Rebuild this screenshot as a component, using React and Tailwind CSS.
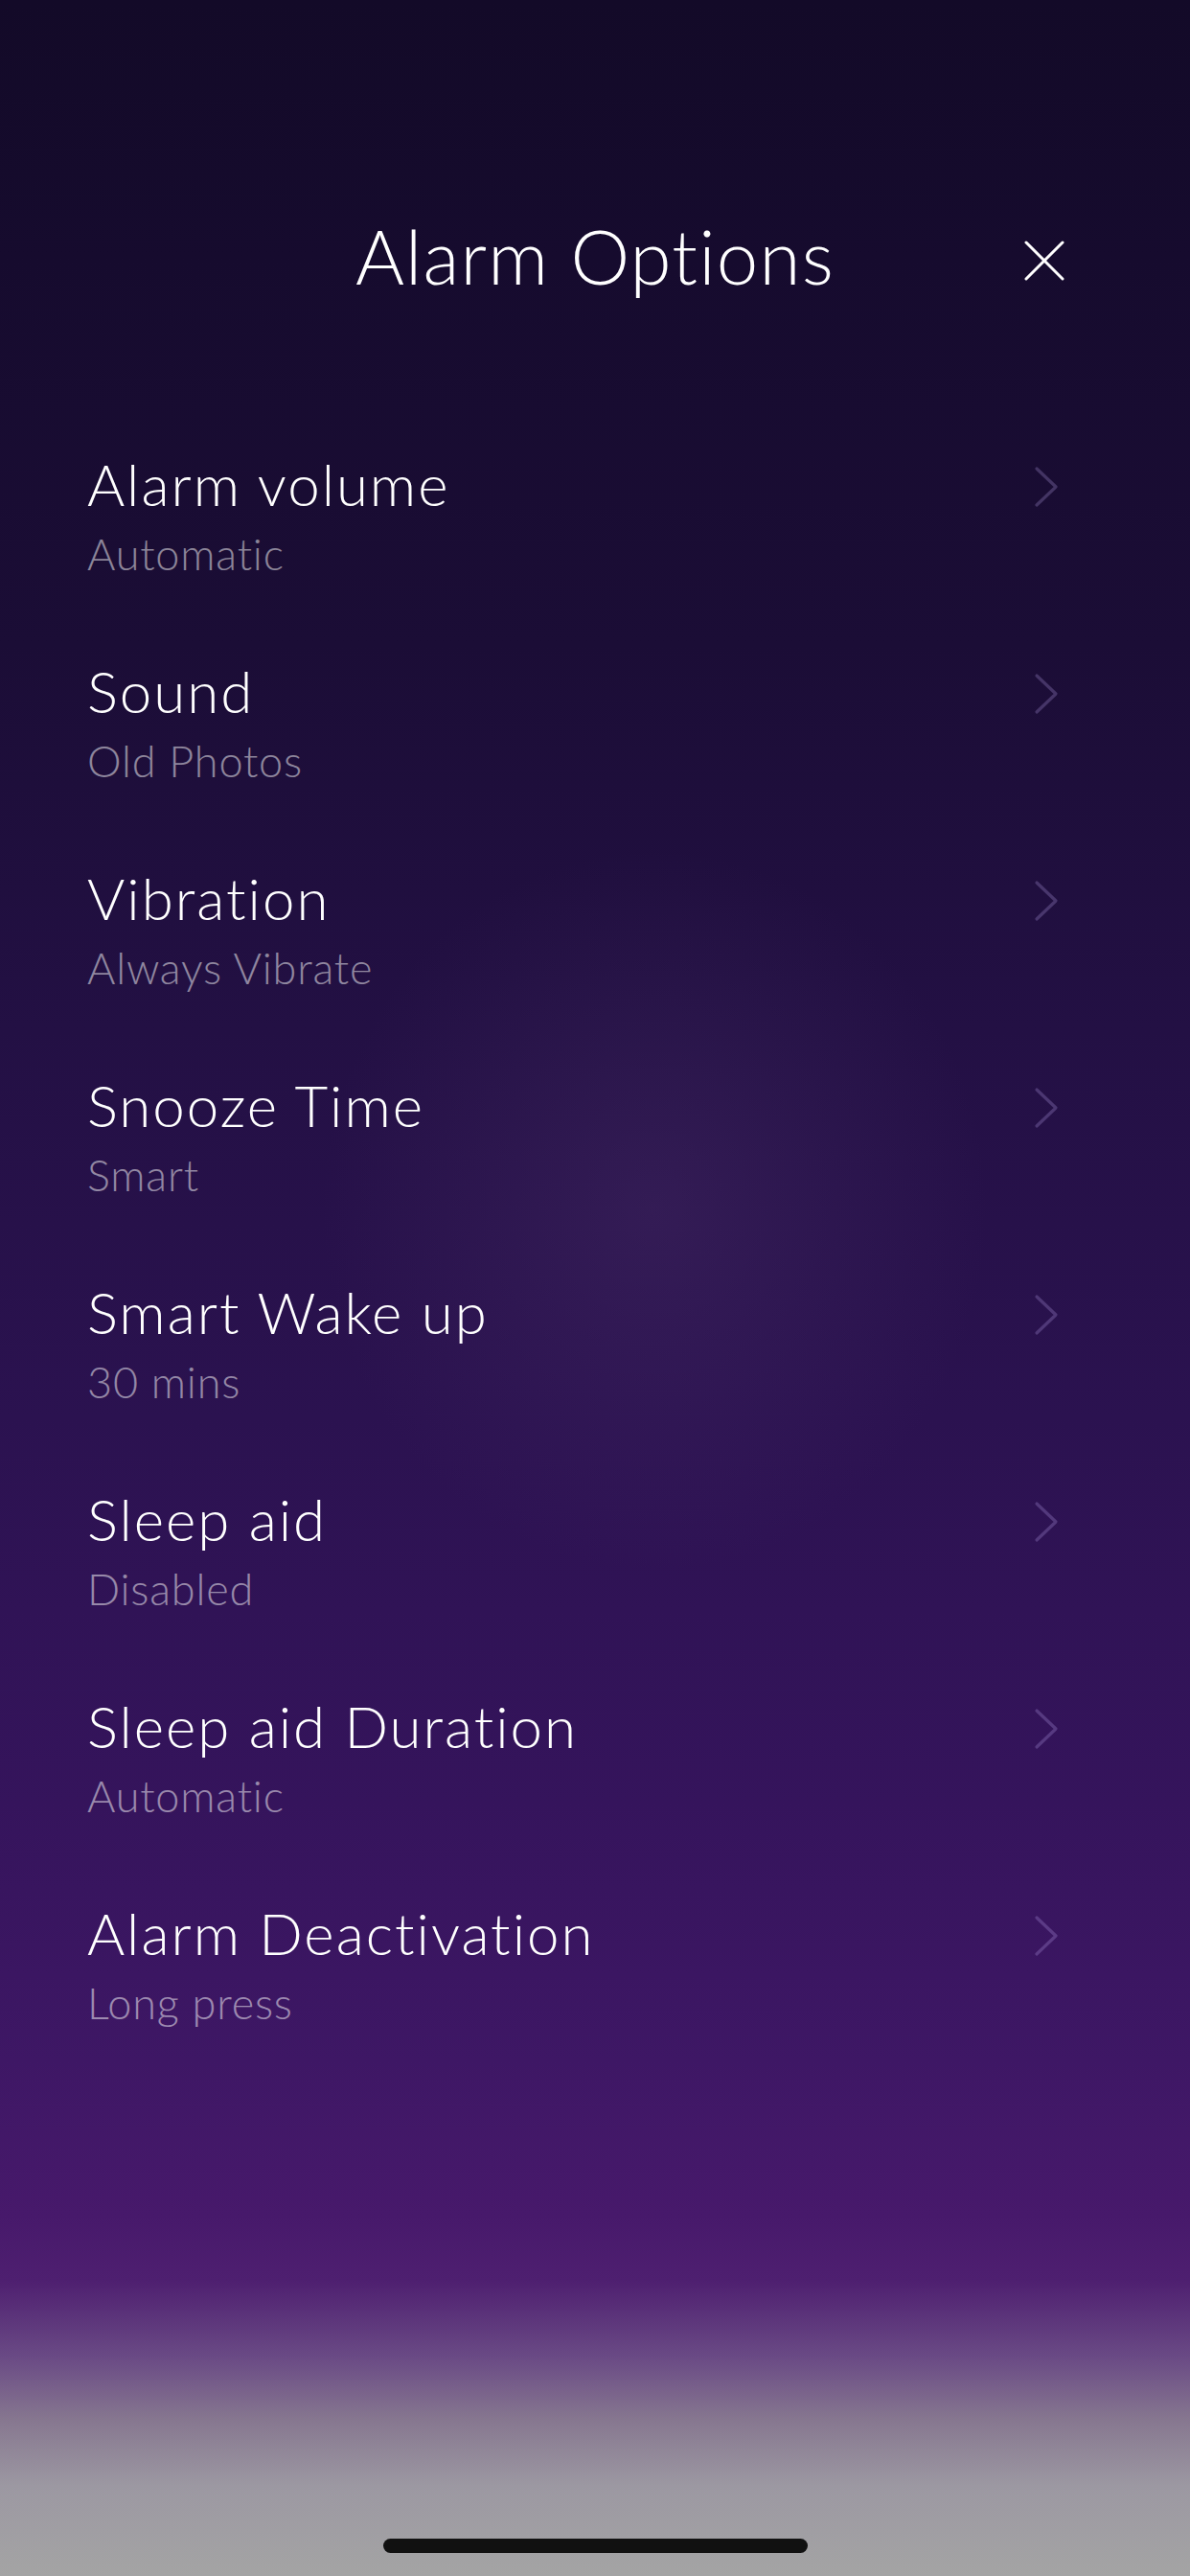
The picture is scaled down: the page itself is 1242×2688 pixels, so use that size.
import React from "react";

const rows = [
  ["Alarm volume", "Automatic"],
  ["Sound", "Old Photos"],
  ["Vibration", "Always Vibrate"],
  ["Snooze Time", "Smart"],
  ["Smart Wake up", "30 mins"],
  ["Sleep aid", "Disabled"],
  ["Sleep aid Duration", "Automatic"],
  ["Alarm Deactivation", "Long press"],
];

function Chevron() {
  return (
    <svg width="26" height="44" viewBox="0 0 26 44" fill="none">
      <polyline points="3,3 23,22 3,41" stroke="rgba(200,180,255,0.24)" strokeWidth="3.2" strokeLinecap="round" strokeLinejoin="round" />
    </svg>
  );
}

function CloseIcon() {
  return (
    <svg width="42" height="42" viewBox="0 0 42 42" fill="none">
      <line x1="2" y1="2" x2="40" y2="40" stroke="white" strokeWidth="3" strokeLinecap="round" />
      <line x1="40" y1="2" x2="2" y2="40" stroke="white" strokeWidth="3" strokeLinecap="round" />
    </svg>
  );
}

export default function App() {
  return (
    <div
      className="flex h-[2688px] w-full flex-col text-white bg-[radial-gradient(ellipse_28%_14%_at_55%_47%,rgba(90,60,120,0.25),transparent),linear-gradient(180deg,#130a28_0%,#160b2e_10%,#1b0d36_25%,#231044_40%,#2b1250_55%,#35145c_70%,#3e1765_80%,#47196b_86%,#4e1f70_88.5%,#6a4a85_91.5%,#877890_94%,#9c98a2_96.5%,#a4a4a4_100%)]"
      style={{ fontFamily: "Lato, 'Open Sans', sans-serif" }}
    >
      <div className="grid grid-cols-[1fr_auto_1fr] items-center pt-[228px]">
        <div />
        <h1 className="text-[78px] leading-none font-light tracking-[1.2px]">Alarm Options</h1>
        <div className="flex justify-end pr-[131px] pt-[10px]">
          <CloseIcon />
        </div>
      </div>

      <div className="mt-[128px] flex flex-col pl-[91px] pr-[137px]">
        {rows.map(([title, sub]) => (
          <div key={title} className="flex h-[216px] flex-col py-[35px]">
            <div className="flex items-center justify-between">
              <span className="text-[60px] leading-[72px] font-light tracking-[2px]">{title}</span>
              <div className="mt-[6px]">
                <Chevron />
              </div>
            </div>
            <span className="text-[45px] leading-[74px] font-light text-white/50 tracking-[0.8px]">{sub}</span>
          </div>
        ))}
      </div>

      <div className="flex-1" />
      <div className="flex justify-center pb-[24px]">
        <div className="h-[15px] w-[443px] rounded-full bg-[#111111]" />
      </div>
    </div>
  );
}
